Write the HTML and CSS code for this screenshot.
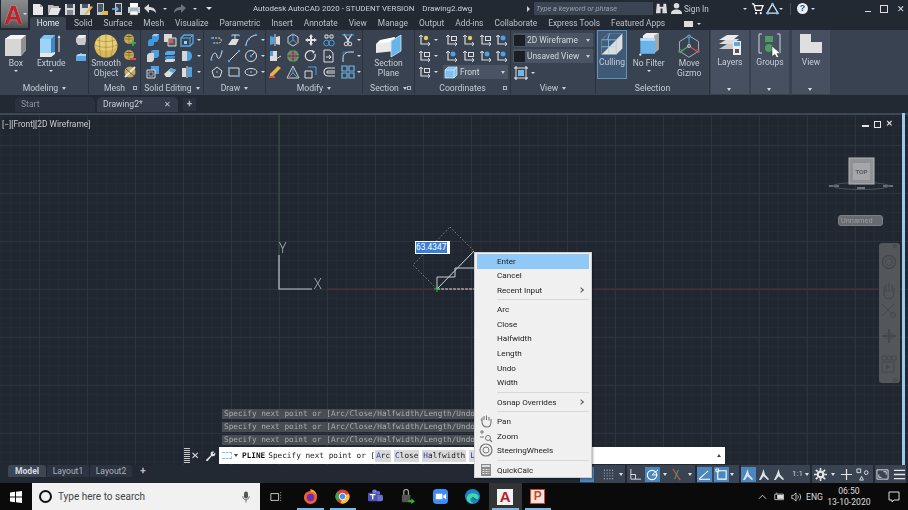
FILE: index.html
```html
<!DOCTYPE html>
<html lang="en">
<head>
<meta charset="utf-8">
<title>AutoCAD 2020</title>
<link rel="stylesheet" href="styles.css">
</head>
<body>
<svg class="defs" aria-hidden="true">
<defs>
<symbol id="box" viewBox="0 0 26 26"><path d="M2 6l6-4h15v15l-5 6H2z" fill="#e6e6e6"/><path d="M2 6h16v17H2z" fill="#d6d6d6"/><path d="M18 6l5-4v15l-5 6z" fill="#8f9091"/><path d="M2 6l6-4h15l-5 4z" fill="#f7f7f7"/></symbol>
<symbol id="extrude" viewBox="0 0 26 26"><path d="M2 6l4-4h11v18l-4 4H2z" fill="#7cc4f3"/><path d="M2 6h11v14H2z" fill="#9bd4f7"/><path d="M13 6l4-4v18l-4 4z" fill="#3f88c5"/><path d="M2 20h11l4-1v2l-4 3H2z" fill="#e9e9e9"/><path d="M21 19V3" stroke="#ddd"/><path d="M19.5 5L21 2l1.5 3z" fill="#ddd"/></symbol>
<symbol id="sphere" viewBox="0 0 26 26"><circle cx="13" cy="13" r="11.5" fill="#d9b95c"/><path d="M2 13a11 11 0 0 1 22 0c-4 6-18 6-22 0z" fill="#e8cf77"/><path d="M2 12c5 3 17 3 22 0M4 7c5 2 13 2 18 0M13 2v22M7 4c-1 6-1 13 1 19M19 4c1 6 1 13-1 19" stroke="#9a7f35" stroke-width=".6" fill="none"/></symbol>
<symbol id="surf" viewBox="0 0 14 14"><path d="M2 5l3-3h7v6l-1 4H4l-2-3z" fill="#c9c9c9"/><path d="M5 2h7l-2 3H3z" fill="#eee"/></symbol>
<symbol id="smallblue" viewBox="0 0 14 14"><path d="M2 7h4V4h2v3h4v5H2z" fill="#5ba9e3"/><path d="M2 7l2-2h8v2z" fill="#a9d7f6"/></symbol>
<symbol id="mplus" viewBox="0 0 14 14"><circle cx="6" cy="6" r="5" fill="#c9ab55"/><path d="M1 6h10M6 1v10M2.5 3c2 1 5 1 7 0" stroke="#7d6a30" stroke-width=".6"/><path d="M10 7v6M7 10h6" stroke="#45b04a" stroke-width="1.6"/></symbol>
<symbol id="mminus" viewBox="0 0 14 14"><circle cx="6" cy="6" r="5" fill="#c9ab55"/><path d="M1 6h10M6 1v10M2.5 3c2 1 5 1 7 0" stroke="#7d6a30" stroke-width=".6"/><path d="M7 10h6" stroke="#d6504c" stroke-width="2"/></symbol>
<symbol id="mslash" viewBox="0 0 14 14"><circle cx="7" cy="7" r="5.5" fill="#c9ab55"/><path d="M2 12L12 2" stroke="#e6e6e6" stroke-width="2"/><path d="M3 4l8 7" stroke="#50606f" stroke-width="1"/></symbol>
<symbol id="union" viewBox="0 0 14 14"><path d="M2 8l2-2h2V3l2-2h5v5l-2 3H8v3l-2 1H2z" fill="#3f9ae0"/><path d="M6 3l2-2h5l-2 2z" fill="#9dd2f6"/></symbol>
<symbol id="subtract" viewBox="0 0 14 14"><path d="M1 1h8v8H1z" fill="#d8d8d8"/><path d="M5 5h8v8H5z" fill="#555d6a" stroke="#ddd"/><path d="M6 6h4v4H6z" fill="#d65a55"/></symbol>
<symbol id="cubeblue" viewBox="0 0 14 14"><path d="M1 5l3-3h9v8l-3 3H1z" fill="none" stroke="#58a8e4" stroke-width="1.3"/><path d="M1 5h9v8M10 5l3-3" fill="none" stroke="#58a8e4"/><path d="M4 8h3v3H4z" fill="#9ad0f6"/></symbol>
<symbol id="cubes" viewBox="0 0 14 14"><path d="M1 6l2-2h5v7l-2 2H1z" fill="#d6d6d6"/><path d="M5 2l2-1h6v6l-2 2H8V4H5z" fill="#4ba0e2"/></symbol>
<symbol id="slices" viewBox="0 0 14 14"><path d="M2 4l2-2h8v3l-2 1H2z" fill="#57a7e4"/><path d="M2 8l2-1h8v2l-2 1H2z" fill="#3a8ed0"/><path d="M2 11l2-1h8v2l-2 1H2z" fill="#d6d6d6"/></symbol>
<symbol id="half" viewBox="0 0 14 14"><path d="M2 2h5v10H2z" fill="#d6d6d6"/><path d="M7 2c4 0 5 3 5 5s-1 5-5 5z" fill="#4da1e2"/></symbol>
<symbol id="cubeline" viewBox="0 0 14 14"><path d="M5 1h8v8H5z" fill="#4da1e2"/><path d="M1 5h8v8H1z" fill="#3a4352" stroke="#ddd"/><path d="M3 7h4v4H3z" fill="none" stroke="#ddd" stroke-width=".6"/></symbol>
<symbol id="eraser" viewBox="0 0 14 14"><path d="M1 9l7-6 5 2-6 7H3z" fill="#ddd"/><path d="M8 3l5 2-3 3-4-2z" fill="#58a8e4"/></symbol>
<symbol id="halves" viewBox="0 0 14 14"><path d="M2 3h4v9H2z" fill="#ddd"/><path d="M8 2h4v10H8z" fill="#4da1e2"/><path d="M7 1v12" stroke="#ddd"/></symbol>
<symbol id="pline" viewBox="0 0 14 14"><path d="M2 5h7c3 0 3 5 0 5H4" fill="none" stroke="#ddd" stroke-dasharray="2 1"/><circle cx="2" cy="5" r="1" fill="#4da1e2"/><circle cx="4" cy="10" r="1" fill="#4da1e2"/></symbol>
<symbol id="hatch" viewBox="0 0 14 14"><path d="M1 12l4-6h7l-3 6z" fill="#ddd"/><path d="M5 2h7M8 2v5" stroke="#ddd"/><circle cx="5" cy="2.500" r="1" fill="#4da1e2"/><circle cx="12" cy="2.500" r="1" fill="#4da1e2"/></symbol>
<symbol id="arc" viewBox="0 0 14 14"><path d="M2 12C3 6 7 3 12 2" fill="none" stroke="#ddd"/><circle cx="2" cy="12" r="1.200" fill="#4da1e2"/><circle cx="5" cy="6" r="1.200" fill="#4da1e2"/><circle cx="12" cy="2" r="1.200" fill="#4da1e2"/></symbol>
<symbol id="spline" viewBox="0 0 14 14"><path d="M1 11C3 2 6 3 7 7s3 4 5-5" fill="none" stroke="#ddd"/><circle cx="1.500" cy="11" r="1" fill="#4da1e2"/><circle cx="7" cy="7" r="1" fill="#4da1e2"/><circle cx="12" cy="2" r="1" fill="#4da1e2"/></symbol>
<symbol id="line" viewBox="0 0 14 14"><path d="M2 12L12 2" stroke="#ddd"/><circle cx="2" cy="12" r="1.200" fill="#4da1e2"/><circle cx="12" cy="2" r="1.200" fill="#4da1e2"/></symbol>
<symbol id="circle" viewBox="0 0 14 14"><circle cx="7" cy="7" r="5.500" fill="none" stroke="#ddd"/><path d="M7 7l4-4" stroke="#ddd"/><circle cx="7" cy="7" r="1.200" fill="#4da1e2"/></symbol>
<symbol id="polygon" viewBox="0 0 14 14"><path d="M7 2l5 4-2 6H4L2 6z" fill="none" stroke="#ddd"/><circle cx="7" cy="7" r="1" fill="#4da1e2"/></symbol>
<symbol id="rect" viewBox="0 0 14 14"><path d="M2 3h10v8H2z" fill="none" stroke="#ddd"/><circle cx="2" cy="3" r="1.200" fill="#4da1e2"/><circle cx="12" cy="11" r="1.200" fill="#4da1e2"/></symbol>
<symbol id="ellipse" viewBox="0 0 14 14"><ellipse cx="7" cy="7" rx="6" ry="3.500" fill="none" stroke="#ddd"/><circle cx="7" cy="7" r="1" fill="#4da1e2"/></symbol>
<symbol id="mirror" viewBox="0 0 14 14"><path d="M2 3l4 1v7l-4 1z" fill="#4da1e2"/><path d="M12 3L8 4v7l4 1z" fill="#ddd"/><path d="M7 1v12" stroke="#ddd"/></symbol>
<symbol id="gizmo" viewBox="0 0 14 14"><path d="M7 1l5 3v6l-5 3-5-3V4z" fill="none" stroke="#ccc"/><path d="M7 7V2M7 7l-4 3M7 7l4 3" stroke="#4da1e2"/><circle cx="3" cy="10" r="1" fill="#4fb35a"/><circle cx="11" cy="10" r="1" fill="#d6504c"/><circle cx="7" cy="2" r="1" fill="#4da1e2"/></symbol>
<symbol id="move" viewBox="0 0 14 14"><path d="M7 1l2 3H8v2h2V5l3 2-3 2V8H8v2h1l-2 3-2-3h1V8H4v1L1 7l3-2v1h2V4H5z" fill="#e2e2e2"/></symbol>
<symbol id="chain" viewBox="0 0 14 14"><circle cx="4.500" cy="10" r="2.800" fill="none" stroke="#4da1e2"/><circle cx="9.500" cy="10" r="2.800" fill="none" stroke="#4da1e2"/><path d="M3 2h3v3H3zM8 2h3v3H8z" fill="none" stroke="#ddd"/></symbol>
<symbol id="scissors" viewBox="0 0 14 14"><path d="M3 1l5 8M11 1L6 9" stroke="#ddd" stroke-width="1.400"/><circle cx="5" cy="11" r="1.800" fill="none" stroke="#ddd"/><circle cx="9" cy="11" r="1.800" fill="none" stroke="#ddd"/><path d="M1 2h12" stroke="#4da1e2"/></symbol>
<symbol id="stretch" viewBox="0 0 14 14"><path d="M2 2h7v10H2z" fill="#ddd"/><path d="M2 2h3v5H2z" fill="#4da1e2"/><path d="M8 10l5-3" stroke="#ddd"/></symbol>
<symbol id="wheel" viewBox="0 0 14 14"><circle cx="7" cy="7" r="6" fill="#54a36a"/><circle cx="7" cy="7" r="4" fill="#c9544f"/><circle cx="7" cy="7" r="2" fill="#4da1e2"/><path d="M1 7h12M7 1v12" stroke="#3a4352"/></symbol>
<symbol id="rotate" viewBox="0 0 14 14"><path d="M11 5a5 5 0 1 1-2-2.500" fill="none" stroke="#ddd" stroke-width="1.300"/><path d="M8 1l3 1.500L9 5z" fill="#ddd"/></symbol>
<symbol id="docarrow" viewBox="0 0 14 14"><path d="M2 1h6l3 3v9H2z" fill="none" stroke="#ddd"/><path d="M4 8h5M7 6l2 2-2 2" stroke="#ddd" fill="none"/></symbol>
<symbol id="fillet" viewBox="0 0 14 14"><path d="M2 13V9c0-4 3-6 7-6h4" fill="none" stroke="#ddd"/><path d="M2 13V3h10" fill="none" stroke="#4da1e2" stroke-width=".6"/></symbol>
<symbol id="pencil" viewBox="0 0 14 14"><path d="M2 9l8-8 3 2-8 8-3 1z" fill="#e5b84a"/><path d="M1 12h6" stroke="#d6504c" stroke-width="2"/></symbol>
<symbol id="tri" viewBox="0 0 14 14"><path d="M7 1l6 12H1z" fill="none" stroke="#ccc"/><path d="M7 8V3M7 8l-4 4M7 8l4 4" stroke="#4da1e2"/><circle cx="3" cy="12" r="1" fill="#d6504c"/><circle cx="11" cy="12" r="1" fill="#4fb35a"/></symbol>
<symbol id="scale" viewBox="0 0 14 14"><path d="M1 6h7v7H1z" fill="none" stroke="#ddd"/><path d="M4 2h8v8" fill="none" stroke="#4da1e2"/></symbol>
<symbol id="offset" viewBox="0 0 14 14"><path d="M13 3H6a4 4 0 0 0 0 8h7M13 6H6a1 1 0 0 0 0 2h7" fill="none" stroke="#ddd" stroke-width="1.200"/></symbol>
<symbol id="array" viewBox="0 0 14 14"><path d="M1 1h5v5H1zM8 1h5v5H8zM1 8h5v5H1zM8 8h5v5H8z" fill="none" stroke="#6fb7ea" stroke-width="1.200"/></symbol>
<symbol id="plane" viewBox="0 0 30 26"><path d="M2 11l19-7v14L2 20z" fill="#e9e9e9"/><path d="M2 11l4-4 15-3-5 5z" fill="#fff"/><path d="M17 8l10-6v16l-10 6z" fill="#68b5ec" stroke="#cfe7f8" stroke-width=".8"/></symbol>
<symbol id="ucs" viewBox="0 0 14 14"><path d="M3 2v9h9" fill="none" stroke="#ddd" stroke-width="1.200"/><path d="M1 4l2-2 2 2M10 9l2 2-2 2" fill="none" stroke="#ddd"/><circle cx="8" cy="5" r="2.200" fill="#e8c95a"/></symbol>
<symbol id="ucsb" viewBox="0 0 14 14"><path d="M3 2v9h9" fill="none" stroke="#ddd" stroke-width="1.200"/><path d="M1 4l2-2 2 2M10 9l2 2-2 2" fill="none" stroke="#ddd"/><circle cx="8" cy="5" r="2.500" fill="#4da1e2"/></symbol>
<symbol id="ucsd" viewBox="0 0 14 14"><path d="M3 2v9h9" fill="none" stroke="#ddd" stroke-width="1.200"/><path d="M1 4l2-2 2 2M10 9l2 2-2 2" fill="none" stroke="#ddd"/><path d="M6 3h6v5H6z" fill="#ddd"/><path d="M7 4h4v3H7z" fill="#3a4352"/></symbol>
<symbol id="frontcube" viewBox="0 0 14 14"><path d="M1 5l3-3h9v8l-3 3H1z" fill="#7ec0f0" stroke="#dff" stroke-width=".6"/><path d="M1 5h9v8M10 5l3-3" fill="none" stroke="#e6f3fc" stroke-width=".7"/></symbol>
<symbol id="vport" viewBox="0 0 14 14"><path d="M2 2h10v10H2z" fill="none" stroke="#ddd"/><path d="M4 4h6v6H4z" fill="#6fb7ea"/><path d="M1 1h2M1 1v2M13 1h-2M13 1v2M1 13h2M1 13v-2M13 13h-2M13 13v-2" stroke="#fff"/></symbol>
<symbol id="culling" viewBox="0 0 30 30"><path d="M3 9l7-7h17v17l-7 7H3z" fill="#dedede"/><path d="M3 9l7-7h17L3 26z" fill="#41607f"/><path d="M3 9h17v17M20 9l7-7M3 17h17M11 9v17M12 2l-2 7" fill="none" stroke="#9fd0ef" stroke-width=".8"/></symbol>
<symbol id="nofilter" viewBox="0 0 30 30"><path d="M8 3l4-3h14v19l-5 4H8z" fill="#eee"/><path d="M21 3l5-3v19l-5 4z" fill="#a7a7a7"/><path d="M5 6h17v18H5z" fill="#6ab4ec"/><path d="M5 6h17v3H5z" fill="#bde0f8"/><circle cx="5" cy="25" r="1.300" fill="#d8eefc"/></symbol>
<symbol id="movegizmo" viewBox="0 0 30 30"><path d="M15 3l11 7v11l-11 7-11-7V10z" fill="none" stroke="#b9bec6"/><path d="M15 15V5" stroke="#4da1e2" stroke-width="1.200"/><path d="M15 15L6 21" stroke="#54b060" stroke-width="1.200"/><path d="M15 15l9 6" stroke="#d6504c" stroke-width="1.200"/><circle cx="15" cy="4" r="1.800" fill="none" stroke="#4da1e2"/><circle cx="15" cy="15" r="1.800" fill="none" stroke="#ccc"/><circle cx="5" cy="21" r="1.800" fill="none" stroke="#54b060"/><circle cx="25" cy="21" r="1.800" fill="none" stroke="#d6504c"/></symbol>
<symbol id="layers" viewBox="0 0 24 24"><path d="M1 16l8-5h14l-6 5z" fill="#c9c9c9"/><path d="M1 11l8-5h12l-6 5z" fill="#dcdcdc"/><path d="M1 7l8-5h12l-6 5z" fill="#eaeaea"/><path d="M15 8h8v14h-8z" fill="#eee"/><path d="M16 9h6v4h-6z" fill="#59a9e6"/><path d="M17 16h4v4h-4z" fill="#555"/></symbol>
<symbol id="groups" viewBox="0 0 24 24"><path d="M4 1H1v19h3M19 1h3v19h-3" fill="none" stroke="#cfd3d8"/><path d="M7 3h8v6H7z" fill="#4f9d63"/><circle cx="11" cy="15" r="4" fill="#4f9d63"/><path d="M14 13l8 7-3 .5 2 4-2 1-2-4-3 2z" fill="#fff" stroke="#222" stroke-width=".5"/></symbol>
<symbol id="view" viewBox="0 0 24 24"><path d="M1 1h11v8h11v11H1z" fill="#dfdfdf"/></symbol>
<symbol id="q-new" viewBox="0 0 14 14"><path d="M2 2h7l3 3v8H2z" fill="#e8e8e8"/><path d="M9 2l3 3H9z" fill="#999"/></symbol>
<symbol id="q-open" viewBox="0 0 14 14"><path d="M1 3h5l1 1h5v2H4l-3 6z" fill="#bbb"/><path d="M4 6h10l-3 7H1z" fill="#e6e6e6"/></symbol>
<symbol id="q-save" viewBox="0 0 14 14"><path d="M2 2h10v11H2z" fill="#d8d8d8"/><path d="M4 2h6v4H4z" fill="#4b5564"/><path d="M4 8h6v5H4z" fill="#848b95"/></symbol>
<symbol id="q-saveas" viewBox="0 0 14 14"><path d="M1 2h10v11H1z" fill="#d8d8d8"/><path d="M3 2h6v4H3z" fill="#4b5564"/><path d="M6 11l6-7 2 1-6 7-3 1z" fill="#e5b84a"/></symbol>
<symbol id="q-cloud" viewBox="0 0 14 14"><path d="M2 1h7v12H2z" fill="#c5c5c5"/><path d="M3 2h5v8H3z" fill="#4b5564"/><path d="M7 9h6v4H7z" fill="#e5b84a"/></symbol>
<symbol id="q-share" viewBox="0 0 14 14"><path d="M4 1h7v12H4z" fill="#ccc"/><path d="M5 2h5v8H5z" fill="#3a4352"/><path d="M1 7h6M5 5l2 2-2 2" stroke="#6fb7ea" fill="none" stroke-width="1.300"/></symbol>
<symbol id="q-print" viewBox="0 0 14 14"><path d="M3 1h8v4H3z" fill="#fff"/><path d="M1 5h12v6H1z" fill="#cfcfcf"/><path d="M3 9h8v4H3z" fill="#fff" stroke="#666" stroke-width=".5"/><path d="M3 7h8" stroke="#4da1e2"/></symbol>
<symbol id="q-undo" viewBox="0 0 14 14"><path d="M1 6l5-4v3c4 0 7 2 7 6-2-2-3-3-7-3v3z" fill="#d8d8d8"/></symbol>
<symbol id="q-redo" viewBox="0 0 14 14"><path d="M13 6L8 2v3c-4 0-7 2-7 6 2-2 3-3 7-3v3z" fill="#6a7280"/></symbol>
<symbol id="binoc" viewBox="0 0 14 14"><path d="M2 2h3v3h4V2h3l1 10H8V7H6v5H1z" fill="#ddd"/></symbol>
<symbol id="user" viewBox="0 0 14 14"><circle cx="7" cy="4" r="3" fill="#ddd"/><path d="M1 13c0-4 3-5 6-5s6 1 6 5z" fill="#ddd"/></symbol>
<symbol id="cart" viewBox="0 0 14 14"><path d="M1 2h2l2 7h6l2-5H4" fill="none" stroke="#fff" stroke-width="1.300"/><circle cx="5.500" cy="12" r="1.200" fill="#fff"/><circle cx="10.500" cy="12" r="1.200" fill="#fff"/></symbol>
<symbol id="a360" viewBox="0 0 14 14"><path d="M7 2l6 10H1z" fill="none" stroke="#d5e6f5" stroke-width="1.400"/><circle cx="7" cy="2.500" r="1.500" fill="#7ec0f0"/><circle cx="2" cy="12" r="1.500" fill="#7ec0f0"/><circle cx="12" cy="12" r="1.500" fill="#7ec0f0"/></symbol>
<symbol id="hand" viewBox="0 0 14 14"><path d="M3 7V3.500M5 6V2M7.500 6V1.500M10 6.500V3M3 7L2 5.500M3 7c0 4 2 6 5 6 3 0 4-2 4-5V5" fill="none" stroke="#777" stroke-width="1.100"/></symbol>
<symbol id="zoomm" viewBox="0 0 14 14"><path d="M1 3h4M3 1v4M1 8h4" stroke="#777"/><circle cx="9" cy="9" r="2.500" fill="none" stroke="#777"/><path d="M11 11l2 2" stroke="#777" stroke-width="1.200"/></symbol>
<symbol id="steer" viewBox="0 0 14 14"><circle cx="7" cy="7" r="6" fill="none" stroke="#777" stroke-width="1.200"/><circle cx="7" cy="7" r="3" fill="none" stroke="#777"/></symbol>
<symbol id="calc" viewBox="0 0 14 14"><path d="M2 1h10v12H2z" fill="#8a8a8a"/><path d="M3 2h8v2H3z" fill="#ddd"/><path d="M3.500 6h2v1h-2zM6.500 6h2v1h-2zM9.500 6h1v1h-1zM3.500 8h2v1h-2zM6.500 8h2v1h-2zM9.500 8h1v1h-1zM3.500 10h2v1h-2zM6.500 10h2v1h-2zM9.500 10h1v1h-1z" fill="#e5e5e5"/></symbol>
<symbol id="wrench" viewBox="0 0 14 14"><path d="M2 12L8 6c-1-3 1-5 4-4L10 4l1 1 2-2c1 3-1 5-4 4l-5 6z" fill="#e8e8e8"/></symbol>
<symbol id="grid" viewBox="0 0 14 14"><path d="M2 2h1v1H2zM5 2h1v1H5zM8 2h1v1H8zM11 2h1v1h-1zM2 5h1v1H2zM5 5h1v1H5zM8 5h1v1H8zM11 5h1v1h-1zM2 8h1v1H2zM5 8h1v1H5zM8 8h1v1H8zM11 8h1v1h-1zM2 11h1v1H2zM5 11h1v1H5zM8 11h1v1H8zM11 11h1v1h-1z" fill="#dfe3e8"/></symbol>
<symbol id="ortho" viewBox="0 0 14 14"><path d="M2 1v11h11M2 7h5v5" fill="none" stroke="#dfe3e8"/></symbol>
<symbol id="polar" viewBox="0 0 14 14"><circle cx="6.500" cy="7.500" r="5" fill="none" stroke="#fff" stroke-width="1.200"/><path d="M6.500 7.500L13 2M6.500 7.500h6" stroke="#fff"/></symbol>
<symbol id="osnap" viewBox="0 0 14 14"><path d="M3 1l8 12" stroke="#d6504c" stroke-width="1.200"/><path d="M9 2L5 12" stroke="#54b060" stroke-width="1"/></symbol>
<symbol id="angle" viewBox="0 0 14 14"><path d="M1 12h12M1 12L11 3" stroke="#fff" stroke-width="1.100"/></symbol>
<symbol id="sq" viewBox="0 0 14 14"><path d="M3 3h9v9H3z" fill="none" stroke="#fff" stroke-width="1.200"/><path d="M1 1h3v3H1z" fill="none" stroke="#fff"/></symbol>
<symbol id="person" viewBox="0 0 14 14"><path d="M6 1l1.500 6L12 12l-1.500 1L6 9l-3 4H1l3-6z" fill="#dfe3e8"/></symbol>
<symbol id="gear" viewBox="0 0 14 14"><circle cx="7" cy="7" r="3" fill="none" stroke="#e6e6e6" stroke-width="2.400"/><path d="M7 0v3M7 11v3M0 7h3M11 7h3M2 2l2 2M10 10l2 2M12 2l-2 2M2 12l2-2" stroke="#e6e6e6" stroke-width="1.800"/></symbol>
<symbol id="plus" viewBox="0 0 14 14"><path d="M7 1v12M1 7h12" stroke="#e6e6e6" stroke-width="1.300"/></symbol>
<symbol id="shapes" viewBox="0 0 14 14"><path d="M1 1h4v4H1zM4 13l2-4 2 4z" fill="none" stroke="#dfe3e8"/><circle cx="11" cy="5" r="2" fill="none" stroke="#dfe3e8"/></symbol>
<symbol id="mon" viewBox="0 0 14 14"><path d="M1 2h12v10H1z" fill="none" stroke="#dfe3e8"/><path d="M8 4h3v3M6 10H3V7" fill="none" stroke="#dfe3e8"/></symbol>
<symbol id="menu3" viewBox="0 0 14 14"><path d="M1 2.500h12M1 7h12M1 11.500h12" stroke="#e6e6e6" stroke-width="1.400"/></symbol>
</defs>
</svg>

<header class="top">
  <button class="app"><span class="app-a">A</span><i class="caret mini"></i></button>
  <div class="titlebar">
    <div class="qat">
      <svg class="i"><use href="#q-new"/></svg><svg class="i"><use href="#q-open"/></svg><svg class="i"><use href="#q-save"/></svg><svg class="i"><use href="#q-saveas"/></svg><svg class="i"><use href="#q-cloud"/></svg><svg class="i"><use href="#q-share"/></svg><svg class="i"><use href="#q-print"/></svg><svg class="i"><use href="#q-undo"/></svg><i class="caret mini"></i><svg class="i"><use href="#q-redo"/></svg><i class="caret mini"></i><i class="caret q-c"></i>
    </div>
    <div class="doc-title">Autodesk AutoCAD 2020 - STUDENT VERSION<span class="doc-name">Drawing2.dwg</span></div>
    <i class="play"></i>
    <div class="search">Type a keyword or phrase</div>
    <div class="account">
      <svg class="i"><use href="#binoc"/></svg><svg class="i"><use href="#user"/></svg><span class="signin">Sign In</span><i class="caret mini"></i><svg class="i"><use href="#cart"/></svg><svg class="i"><use href="#a360"/></svg><i class="caret mini"></i><i class="vsep"></i><span class="help">?</span><i class="caret mini"></i>
    </div>
    <div class="winbtns">
      <span class="w-min"></span><span class="w-res"></span><span class="w-x">✕</span>
    </div>
  </div>
  <nav class="tabs">
    <a class="tab on">Home</a><a class="tab">Solid</a><a class="tab">Surface</a><a class="tab">Mesh</a><a class="tab">Visualize</a><a class="tab">Parametric</a><a class="tab">Insert</a><a class="tab">Annotate</a><a class="tab">View</a><a class="tab">Manage</a><a class="tab">Output</a><a class="tab">Add-ins</a><a class="tab">Collaborate</a><a class="tab">Express Tools</a><a class="tab">Featured Apps</a><span class="tab-min"></span><i class="caret mini"></i>
  </nav>
</header>

<section class="ribbon">
  <div class="panel p-modeling">
    <div class="pbody">
      <div class="big b-box"><svg class="bi"><use href="#box"/></svg><span>Box</span><i class="caret mini"></i></div>
      <div class="big b-ext"><svg class="bi"><use href="#extrude"/></svg><span>Extrude</span><i class="caret mini"></i></div>
      <div class="stack"><svg class="i"><use href="#surf"/></svg><svg class="i"><use href="#smallblue"/></svg></div>
    </div>
    <div class="plabel">Modeling <i class="caret"></i></div>
  </div>
  <div class="panel p-mesh">
    <div class="pbody">
      <div class="big b-smooth"><svg class="bi"><use href="#sphere"/></svg><span>Smooth<br>Object</span></div>
      <div class="stack s3"><svg class="i"><use href="#mplus"/></svg><svg class="i"><use href="#mminus"/></svg><svg class="i"><use href="#mslash"/></svg></div>
    </div>
    <div class="plabel">Mesh<i class="launch"></i></div>
  </div>
  <div class="panel p-solid">
    <div class="pbody">
      <div class="tools t4">
        <svg class="i"><use href="#union"/></svg><svg class="i"><use href="#subtract"/></svg><svg class="i"><use href="#cubeblue"/></svg><i class="caret mini"></i>
        <svg class="i"><use href="#cubes"/></svg><svg class="i"><use href="#slices"/></svg><svg class="i"><use href="#half"/></svg><i class="caret mini"></i>
        <svg class="i"><use href="#cubeline"/></svg><svg class="i"><use href="#eraser"/></svg><svg class="i"><use href="#halves"/></svg><i class="caret mini"></i>
      </div>
    </div>
    <div class="plabel">Solid Editing <i class="caret"></i></div>
  </div>
  <div class="panel p-draw">
    <div class="pbody">
      <div class="tools t4">
        <svg class="i"><use href="#pline"/></svg><svg class="i"><use href="#hatch"/></svg><svg class="i"><use href="#arc"/></svg><i class="caret mini"></i>
        <svg class="i"><use href="#spline"/></svg><svg class="i"><use href="#line"/></svg><svg class="i"><use href="#circle"/></svg><i class="caret mini"></i>
        <svg class="i"><use href="#polygon"/></svg><svg class="i"><use href="#rect"/></svg><svg class="i"><use href="#ellipse"/></svg><i class="caret mini"></i>
      </div>
    </div>
    <div class="plabel">Draw <i class="caret"></i></div>
  </div>
  <div class="panel p-modify">
    <div class="pbody">
      <div class="tools t-mod">
        <svg class="i"><use href="#mirror"/></svg><svg class="i"><use href="#gizmo"/></svg><svg class="i"><use href="#move"/></svg><svg class="i"><use href="#chain"/></svg><svg class="i"><use href="#scissors"/></svg><i class="caret mini"></i>
        <svg class="i"><use href="#stretch"/></svg><svg class="i"><use href="#wheel"/></svg><svg class="i"><use href="#rotate"/></svg><svg class="i"><use href="#docarrow"/></svg><svg class="i"><use href="#fillet"/></svg><i class="caret mini"></i>
        <svg class="i"><use href="#pencil"/></svg><svg class="i"><use href="#tri"/></svg><svg class="i"><use href="#scale"/></svg><svg class="i"><use href="#offset"/></svg><svg class="i"><use href="#array"/></svg><i class="caret mini"></i>
      </div>
    </div>
    <div class="plabel">Modify <i class="caret"></i></div>
  </div>
  <div class="panel p-section">
    <div class="pbody">
      <div class="big b-section"><svg class="bi bi-w"><use href="#plane"/></svg><span>Section<br>Plane</span></div>
    </div>
    <div class="plabel">Section <i class="caret"></i><i class="launch"></i></div>
  </div>
  <div class="panel p-coord">
    <div class="pbody">
      <div class="tools t-coord">
        <svg class="i"><use href="#ucs"/></svg><i class="caret mini"></i><svg class="i"><use href="#ucsd"/></svg><svg class="i"><use href="#ucs"/></svg><svg class="i"><use href="#ucsd"/></svg><svg class="i"><use href="#ucsb"/></svg>
        <svg class="i"><use href="#ucsd"/></svg><i class="caret mini"></i><svg class="i"><use href="#ucsb"/></svg><svg class="i"><use href="#ucsd"/></svg><svg class="i"><use href="#ucsb"/></svg><svg class="i"><use href="#ucsb"/></svg>
        <svg class="i"><use href="#ucsd"/></svg><i class="caret mini"></i><div class="combo c-front"><svg class="i"><use href="#frontcube"/></svg><span>Front</span><i class="caret"></i></div>
      </div>
    </div>
    <div class="plabel">Coordinates<i class="launch"></i></div>
  </div>
  <div class="panel p-view">
    <div class="pbody col">
      <div class="combo c-view"><span class="swatch"></span><span>2D Wireframe</span><i class="caret"></i></div>
      <div class="combo c-view"><span class="swatch"></span><span>Unsaved View</span><i class="caret"></i></div>
      <div class="vrow"><svg class="i"><use href="#vport"/></svg><i class="caret mini"></i></div>
    </div>
    <div class="plabel">View <i class="caret"></i></div>
  </div>
  <div class="panel p-sel">
    <div class="pbody">
      <div class="big b-cull"><svg class="bi bi-s"><use href="#culling"/></svg><span>Culling</span></div>
      <div class="big b-nof"><svg class="bi bi-s"><use href="#nofilter"/></svg><span>No Filter</span><i class="caret mini"></i></div>
      <div class="big b-gizmo"><svg class="bi bi-s"><use href="#movegizmo"/></svg><span>Move<br>Gizmo</span></div>
    </div>
    <div class="plabel">Selection</div>
  </div>
  <div class="fold"><svg class="fi"><use href="#layers"/></svg><span>Layers</span><i class="caret"></i></div>
  <div class="fold"><svg class="fi"><use href="#groups"/></svg><span>Groups</span><i class="caret"></i></div>
  <div class="fold f-last"><svg class="fi"><use href="#view"/></svg><span>View</span><i class="caret"></i></div>
</section>

<div class="docs">
  <div class="doc d-start">Start</div>
  <div class="doc d-cur">Drawing2*<span class="d-x">✕</span></div>
  <div class="d-plus">+</div>
</div>

<main class="viewport">
  <svg class="canvas" viewBox="0 113 908 352" aria-hidden="true">
    <path d="M279 113V255" stroke="#2e5a33" stroke-width="1"/>
    <path d="M327 289H900" stroke="#5a2f35" stroke-width="1"/>
    <path d="M279 255V289H312" fill="none" stroke="#c4c7cc" stroke-width="1.200"/>
    <text x="279" y="253" class="axis">Y</text>
    <text x="314" y="289" class="axis">X</text>
    <path d="M450 227L474 251L437 289L413 265Z" fill="none" stroke="#7d838b" stroke-dasharray="1.500 2"/>
    <path d="M437 289V277H455V268H480" fill="none" stroke="#c9cbcf"/>
    <path d="M437 289L474 251" stroke="#c9cbcf"/>
    <path d="M437 289H480" stroke="#d5d7da" stroke-dasharray="3 1"/>
    <path d="M434 289h6M437 286v6" stroke="#3bb54a"/>

    <path d="M829 186h10M883 186h10" stroke="#80858b" stroke-width="1.500"/>
    <ellipse cx="861" cy="186" rx="28" ry="3.500" fill="none" stroke="#4d535b"/>
    <path d="M857 188h8" stroke="#8a8f95" stroke-width="1.500"/>
    <rect x="849" y="158" width="25" height="26" fill="#8f9295" stroke="#b5b7b9"/>
    <rect x="853" y="163" width="17" height="17" fill="#a4a6a8"/>
    <text x="861.500" y="174" class="top-t">TOP</text>

    <rect x="879" y="243" width="21" height="140" rx="3" fill="#53575b"/>
    <circle cx="889" cy="262" r="6.500" fill="none" stroke="#44484c" stroke-width="1.500"/><circle cx="889" cy="262" r="3.500" fill="none" stroke="#44484c"/>
    <path d="M884 292v-6m2 6v-8m3 8v-9m3 9v-7m2 7v-4m-10 4c0 4 2 7 5 7s5-3 5-7" fill="none" stroke="#44484c" stroke-width="1.200"/>
    <path d="M882 304l12 12M894 304l-12 12" stroke="#44484c"/><circle cx="893" cy="315" r="2.500" fill="none" stroke="#44484c"/>
    <path d="M889 329v14M882 336h14" stroke="#44484c" stroke-width="2"/><ellipse cx="889" cy="336" rx="5" ry="3" fill="none" stroke="#44484c"/>
    <path d="M882 356h4v4h-4zM887 356h4v4h-4zM892 356h4v4h-4z" fill="none" stroke="#44484c"/>
    <rect x="882" y="362" width="12" height="10" fill="none" stroke="#44484c"/><path d="M886 364l4 3-4 3z" fill="#44484c"/>
    <circle cx="895" cy="246" r="1.500" fill="none" stroke="#44484c"/><circle cx="895" cy="380" r="1.500" fill="none" stroke="#44484c"/>
  </svg>
  <div class="vlabel">[−][Front][2D Wireframe]</div>
  <div class="vp-ctl"><span class="v-min"></span><span class="v-res"></span><span class="v-x">✕</span></div>
  <div class="unnamed">Unnamed</div>
  <div class="edge"></div>
  <div class="dyn"><span>63.4347</span></div>

  <div class="history">
    <p>Specify next point or [Arc/Close/Halfwidth/Length/Undo</p>
    <p>Specify next point or [Arc/Close/Halfwidth/Length/Undo</p>
    <p>Specify next point or [Arc/Close/Halfwidth/Length/Undo</p>
  </div>
  <div class="cmd">
    <i class="grip"></i><span class="cmd-x">✕</span><svg class="i wr"><use href="#wrench"/></svg>
    <div class="cmd-in">
      <i class="cmd-ic"></i><i class="caret dk"></i>
      <b>PLINE</b><span class="cmd-t">Specify next point or [</span><span class="chip"><u>A</u>rc</span><span class="chip"><u>C</u>lose</span><span class="chip"><u>H</u>alfwidth</span><span class="chip"><u>L</u>e</span>
      <i class="caret dk up"></i>
    </div>
  </div>

  <ul class="menu">
    <li class="hi">Enter</li>
    <li>Cancel</li>
    <li class="sub">Recent Input</li>
    <li class="sep"></li>
    <li>Arc</li>
    <li>Close</li>
    <li>Halfwidth</li>
    <li>Length</li>
    <li>Undo</li>
    <li>Width</li>
    <li class="sep"></li>
    <li class="sub">Osnap Overrides</li>
    <li class="sep"></li>
    <li><svg class="i mi"><use href="#hand"/></svg>Pan</li>
    <li><svg class="i mi"><use href="#zoomm"/></svg>Zoom</li>
    <li><svg class="i mi"><use href="#steer"/></svg>SteeringWheels</li>
    <li class="sep"></li>
    <li><svg class="i mi"><use href="#calc"/></svg>QuickCalc</li>
  </ul>
</main>

<footer class="status">
  <div class="ltabs">
    <span class="lt on">Model</span><span class="lt">Layout1</span><span class="lt">Layout2</span><span class="lt-plus">+</span>
  </div>
  <div class="sgroups">
    <div class="sg sg1"><span class="sb act"></span><svg class="i"><use href="#grid"/></svg><i class="caret"></i></div>
    <div class="sg sg2"><svg class="i"><use href="#ortho"/></svg><span class="sb act"><svg class="i"><use href="#polar"/></svg></span><i class="caret"></i><svg class="i"><use href="#osnap"/></svg><i class="caret"></i></div>
    <div class="sg sg3"><span class="sb act"><svg class="i"><use href="#angle"/></svg></span><span class="sb act"><svg class="i"><use href="#sq"/></svg></span><i class="caret"></i></div>
    <div class="sg sg4"><span class="sb act"><svg class="i"><use href="#person"/></svg></span><svg class="i"><use href="#person"/></svg><svg class="i"><use href="#person"/></svg><span class="ratio">1:1</span><i class="caret"></i></div>
    <div class="sg sg5"><svg class="i"><use href="#gear"/></svg><i class="caret"></i><svg class="i"><use href="#plus"/></svg><svg class="i"><use href="#shapes"/></svg></div>
    <div class="sg sg6"><svg class="i"><use href="#mon"/></svg><svg class="i"><use href="#menu3"/></svg></div>
  </div>
</footer>

<div class="taskbar">
  <div class="start"><svg viewBox="0 0 12 12" class="winlogo"><path d="M0 1.500l5-.7V5.500H0zM6 .7L12 0v5.500H6zM0 6.500h5v4.700l-5-.7zM6 6.500h6V12l-6-.8z" fill="#fff"/></svg></div>
  <div class="tsearch"><i class="cortana"></i><span>Type here to search</span><svg class="mic" viewBox="0 0 10 14"><rect x="2.500" y="0" width="5" height="9" rx="2.500" fill="#555"/><path d="M1 6c0 6 8 6 8 0M5 11v3" fill="none" stroke="#555"/></svg></div>
  <svg class="taskview" viewBox="0 0 14 14"><path d="M1 3h9v8H1zM12 2h1M12 5h1M12 8h1M12 11h1" fill="none" stroke="#ddd"/></svg>
  <div class="apps">
    <span class="ta run"><svg viewBox="0 0 16 16"><circle cx="8" cy="9" r="7" fill="#f2602a"/><circle cx="8" cy="9" r="4" fill="#6b2fb3"/><path d="M8 0c4 1 7 4 7 8-1-3-4-5-7-5z" fill="#ffb02e"/></svg></span>
    <span class="ta run"><svg viewBox="0 0 16 16"><circle cx="8" cy="8" r="7.500" fill="#e0432f"/><path d="M8 8L1.500 12A7.500 7.500 0 0 1 2 3.500z" fill="#2fa84f"/><path d="M8 8l6.800-3A7.500 7.500 0 0 1 6 15.300z" fill="#f9c22e"/><circle cx="8" cy="8" r="3.500" fill="#4a8cf0" stroke="#fff"/></svg></span>
    <span class="ta"><svg viewBox="0 0 16 16"><circle cx="11" cy="4" r="2" fill="#6d71c9"/><rect x="8" y="6" width="8" height="7" rx="2" fill="#6d71c9"/><circle cx="7" cy="3" r="2.500" fill="#7b83eb"/><rect x="0" y="4" width="10" height="9" rx="1" fill="#4b53bc"/><path d="M2 6h6M5 6v5" stroke="#fff" stroke-width="1.400"/></svg></span>
    <span class="ta"><svg viewBox="0 0 16 16"><rect x="2" y="6" width="9" height="8" rx="1" fill="#555"/><path d="M4 6V3a2.500 2.500 0 0 1 5 0v3" fill="none" stroke="#aaa" stroke-width="1.300"/><path d="M9 12h3v-2l4 3-4 3v-2H9z" fill="#2eb82e"/></svg></span>
    <span class="ta"><svg viewBox="0 0 16 16"><rect x="0" y="0" width="16" height="16" rx="4" fill="#3d8ef0"/><path d="M3 5h7v6H3zM11 7l3-2v6l-3-2z" fill="#fff"/></svg></span>
    <span class="ta"><svg viewBox="0 0 16 16"><circle cx="8" cy="8" r="8" fill="#1b84c9"/><path d="M2 9c1-5 9-6 12-2 1 1 1 4-2 4-3 0-2-2-4-2-3 0-3 5 1 6-4 1-8-2-7-6z" fill="#46d6a0"/><path d="M8 9c2 0 1 2 4 2" stroke="#0b3b66" fill="none"/></svg></span>
    <span class="ta run act"><span class="acad">A</span></span>
    <span class="ta run"><span class="ppt">P</span></span>
  </div>
  <div class="tray">
    <svg class="tr-up" viewBox="0 0 10 6"><path d="M1 5l4-4 4 4" fill="none" stroke="#ddd"/></svg>
    <svg class="tr-b" viewBox="0 0 14 10"><path d="M1 2h11v7H1z" fill="none" stroke="#ddd"/><path d="M4 3h8v5H4z" fill="#ddd"/><path d="M3 0l1 2" stroke="#ddd"/></svg>
    <svg class="tr-v" viewBox="0 0 12 12"><path d="M1 4h2l3-3v10L3 8H1z" fill="none" stroke="#ddd"/><path d="M8 4c1 1 1 3 0 4M10 2c2 2 2 6 0 8" fill="none" stroke="#ddd"/></svg>
    <span class="eng">ENG</span>
    <span class="clock">06:50<br>13-10-2020</span>
    <svg class="tr-n" viewBox="0 0 12 12"><path d="M1 1h10v8H6L4 11V9H1z" fill="none" stroke="#ddd"/></svg>
  </div>
</div>
</body>
</html>
```

FILE: styles.css
```css
* { box-sizing: border-box; }
html, body { margin: 0; padding: 0; }
body {
  width: 908px; height: 510px; overflow: hidden;
  display: flex; flex-direction: column;
  background: #222933; color: #c6ccd5;
  font-family: Roboto, "Noto Sans", sans-serif; font-size: 8.5px; line-height: 10px;
  filter: blur(.3px);
}
.defs { position: absolute; width: 0; height: 0; }
.i { width: 14px; height: 14px; flex: none; display: block; }
i { display: block; flex: none; font-style: normal; }
.caret { width: 0; height: 0; border: 2.5px solid transparent; border-top: 3px solid #c6ccd5; border-bottom: 0; display: inline-block; }
.caret.mini { border-width: 2px; border-top-width: 2px; border-bottom: 0; border-top-color: #d8dce2; }

/* header */
.top { height: 30px; display: grid; grid-template-columns: 30px 1fr; grid-template-rows: 17px 13px; flex: none; }
.app {
  grid-row: 1 / 3; width: 27px; height: 28px; margin: 0 0 0 1px; padding: 0 0 0 3px; border: 0;
  background: linear-gradient(#8a8b8d, #6a6b6e 70%, #4a4b4d);
  display: flex; align-items: flex-start; justify-content: flex-start; position: relative;
}
.app .caret { position: absolute; right: 1px; top: 13px; }
.app-a { font: bold 26px/28px "Liberation Sans", sans-serif; color: #bf2329; text-shadow: 0 0 1px #e8e8e8; margin-top: 1px; }
.titlebar { display: flex; align-items: center; min-width: 0; }
.qat { width: 170px; display: flex; align-items: center; padding-left: 1px; flex: none; gap: 2px; }
.q-c { margin-left: 3px; border-top-color: #ddd; border-width: 3px; border-bottom: 0; }
.qat .caret.mini { margin: 0 4px; }
.doc-title { margin-left: 53px; width: 272px; white-space: nowrap; flex: none; font-size: 7.9px; color: #cdd2d9; }
.doc-name { margin-left: 8px; }
.play { margin-left: 2px; width: 0; height: 0; border: 3px solid transparent; border-left: 3px solid #ccc; border-right: 0; }
.search { margin-left: 4px; width: 119px; height: 13px; background: #3b4452; color: #98a0ac; font-style: italic; font-size: 7.4px; line-height: 13px; padding-left: 2px; flex: none; }
.account { display: flex; align-items: center; margin-left: 1px; width: 166px; flex: none; }
.account .i { margin-left: 1px; width: 13px; height: 13px; }
.account .i + .i { margin-left: 2px; }
.signin { margin-left: 1px; width: 59px; font-size: 8.2px; }
.account .caret.mini { margin: 0 3px 0 0; }
.vsep { width: 1px; height: 12px; background: #454d5b; margin: 0 6px 0 4px; }
.help { width: 11px; height: 11px; border-radius: 50%; background: #e9eef4; color: #1d4f86; font: bold 9px/11px "Liberation Sans", sans-serif; text-align: center; margin-right: 3px; }
.winbtns { display: flex; align-items: center; gap: 9px; margin-left: 45px; color: #dfe3e8; flex: none; }
.w-min { width: 6px; height: 1px; background: #ddd; margin-top: 6px; }
.w-res { width: 8px; height: 8px; border: 1px solid #ddd; }
.w-x { font-size: 9px; line-height: 10px; }
.tabs { display: flex; align-items: flex-end; gap: 11px; font-size: 8.4px; color: #b9c0ca; }
.tab { height: 13px; line-height: 13px; white-space: nowrap; }
.tab.on { width: 36px; margin-right: -3px; text-align: center; background: #3a4351; color: #e6e9ee; border-radius: 3px 3px 0 0; }
.tab-min { width: 9px; height: 6px; background: #ddd; margin: 0 -7px 3px 8px; }
.tabs .caret.mini { margin-bottom: 5px; }

/* ribbon */
.ribbon { height: 65px; flex: none; display: flex; padding-left: 1px; background: #394250; }
.panel { background: #394250; display: flex; flex-direction: column; border-right: 1px solid #2b323e; height: 64px; position: relative; flex: none; }
.pbody { flex: 1; display: flex; min-height: 0; }
.pbody.col { flex-direction: column; padding: 3px 2px 0; gap: 2px; }
.plabel { height: 12px; flex: none; text-align: center; line-height: 13px; font-size: 8.6px; color: #c6ccd5; position: relative; }
.plabel .caret { margin-left: 2px; vertical-align: 1px; }
.launch { position: absolute; right: 3px; top: 4px; width: 4px; height: 4px; border: 1px solid #aeb5bf; }
.p-modeling { width: 88px; }
.p-mesh { width: 52px; }
.p-solid { width: 63px; }
.p-draw { width: 62px; }
.p-modify { width: 97px; }
.p-section { width: 52px; }
.p-coord { width: 96px; }
.p-view { width: 85px; }
.p-sel { width: 114px; }
.big { display: flex; flex-direction: column; align-items: center; padding-top: 3px; text-align: center; color: #c6ccd5; }
.bi { width: 26px; height: 26px; display: block; margin-bottom: -1px; flex: none; }
.bi-w { width: 30px; }
.bi-s { width: 28px; height: 26px; }
.big .caret.mini { margin-top: 2px; }
.b-box { width: 30px; }
.b-ext { width: 38px; margin-left: 2px; }
.b-smooth { width: 34px; }
.b-section { width: 51px; }
.b-cull { width: 30px; margin-left: 1px; height: 49px; background: #3f5a77; border: 1px solid #5f93b9; padding-top: 1px; }
.b-nof { width: 42px; margin-left: 1px; }
.b-gizmo { width: 40px; }
.stack { display: flex; flex-direction: column; gap: 2px; padding-top: 3px; margin-left: 4px; }
.s3 { margin-left: 0; }
.tools { display: grid; grid-auto-rows: 16px; align-items: center; justify-items: center; padding-top: 2px; }
.t4 { grid-template-columns: 17px 17px 17px 8px; padding-left: 3px; }
.p-draw .t4 { padding-left: 4px; }
.t-mod { grid-template-columns: 18px 18px 17px 20px 17px 6px; }
.t-coord { grid-template-columns: 16px 10px 17px 17px 17px 16px; padding-left: 2px; }
.t-coord .caret { justify-self: start; margin-left: 1px; }
.combo { display: flex; align-items: center; height: 14px; background: #4a5465; color: #d4d8de; flex: none; position: relative; font-size: 8.4px; }
.combo .caret { position: absolute; right: 3px; top: 6px; }
.t-coord .combo .caret { margin-left: 0; }
.c-front { grid-column: 3 / 7; width: 65px; justify-self: start; gap: 2px; padding-left: 1px; }
.c-view { width: 80px; gap: 2px; padding-left: 1px; }
.swatch { width: 11px; height: 11px; background: #1b1e24; flex: none; }
.vrow { display: flex; align-items: center; gap: 3px; padding-left: 1px; margin-top: 1px; }
.fold { width: 38px; height: 64px; flex: none; background: #465061; display: flex; flex-direction: column; align-items: center; padding-top: 3px; margin-left: 2px; position: relative; color: #c6ccd5; }
.p-sel + .fold { margin-left: 1px; }
.fold .fi { width: 24px; height: 24px; display: block; margin-bottom: 0; }
.fold .caret { position: absolute; bottom: 3px; left: 16px; border-top-color: #ddd; }
.f-last { margin-left: 3px; }

/* docs */
.docs { height: 18px; flex: none; display: flex; align-items: stretch; padding-left: 15px; background: #222933; }
.doc { width: 80px; line-height: 15px; padding-left: 6px; font-size: 8.6px; margin: 2px 0 1px; }
.d-start { background: #2a3240; color: #8c94a0; border-radius: 5px 5px 0 0; }
.d-cur { margin-left: 2px; width: 81px; background: #343c4b; color: #c6ccd5; display: flex; justify-content: space-between; padding-right: 7px; border-radius: 5px 5px 0 0; }
.d-x { font-size: 8px; }
.d-plus { margin: 3px 0 2px 5px; width: 13px; text-align: center; line-height: 12px; background: #2b3340; font-size: 10px; font-weight: bold; color: #bbb; }

/* viewport */
.viewport {
  height: 352px; flex: none; position: relative; border-top: 2px solid #3e4756;
  background-color: #212731;
  background-image:
    linear-gradient(#2d343f 1px, transparent 1px),
    linear-gradient(90deg, #2d343f 1px, transparent 1px),
    linear-gradient(#252c36 1px, transparent 1px),
    linear-gradient(90deg, #252c36 1px, transparent 1px);
  background-size: 48px 48px, 48px 48px, 9.6px 9.6px, 9.6px 9.6px;
  background-position: 0 30px, 39px 0, 0 1px, 0.600px 0;
}
.canvas { position: absolute; left: 0; top: -2px; width: 908px; height: 352px; display: block; }
.axis { font: 300 14px "Open Sans", sans-serif; fill: #b9bcc1; }
.top-t { font: bold 6px "Liberation Sans", sans-serif; fill: #55585c; text-anchor: middle; }
.vlabel { position: absolute; left: 2px; top: 4px; font-size: 8.4px; color: #c9ccd2; white-space: nowrap; }
.vp-ctl { position: absolute; left: 862px; top: 5px; display: flex; align-items: center; gap: 5px; color: #dfe3e8; }
.v-min { width: 7px; height: 2px; background: #e6e6e6; margin-top: 4px; }
.v-res { width: 7px; height: 7px; border: 1.500px solid #e6e6e6; }
.v-x { font-size: 8px; font-weight: bold; line-height: 8px; }
.unnamed { position: absolute; left: 838px; top: 100px; width: 45px; height: 11px; background: #686c72; border: 1px solid #7a7f85; border-radius: 3px; color: #9b9ea2; font-size: 7.4px; line-height: 9px; padding-left: 2px; }
.edge { position: absolute; left: 902px; top: -2px; width: 3px; height: 352px; background: #9cc9ec; }
.dyn { position: absolute; left: 415px; top: 126px; width: 35px; height: 13px; background: #fff; padding: 1px; font-size: 8.4px; line-height: 11px; white-space: nowrap; }
.dyn span { display: inline-block; background: #3a7fd5; color: #fff; padding-right: 1px; }
.history { position: absolute; left: 222px; top: 294px; width: 252px; display: flex; flex-direction: column; gap: 3px; }
.history p { margin: 0; height: 10px; background: #484d54; color: #a9abae; font: 7.72px/10px "DejaVu Sans Mono", monospace; white-space: nowrap; overflow: hidden; padding-left: 2px; }
.cmd { position: absolute; left: 183px; top: 332px; width: 542px; height: 17px; display: flex; align-items: center; }
.grip { width: 6px; height: 15px; margin-left: 1px; background: repeating-linear-gradient(#c8c8c8 0 1px, transparent 1px 2px); }
.cmd-x { font-size: 10px; width: 11px; margin-left: -1px; color: #e0e0e0; text-align: center; }
.wr { width: 12px; height: 12px; margin-left: 4px; }
.cmd-in { margin-left: 3px; flex: 1; height: 17px; background: #fff; display: flex; align-items: center; color: #222; font: 7.72px/17px "DejaVu Sans Mono", monospace; position: relative; white-space: nowrap; overflow: hidden; }
.cmd-ic { width: 10px; height: 7px; margin-left: 3px; border: 1px dashed #8cc0ee; border-left: 0; }
.caret.dk { border-top-color: #444; margin: 0 4px 0 2px; }
.caret.dk.up { position: absolute; right: 0; top: 7px; border-top: 0; border-bottom: 3px solid #444; }
.cmd-in b { font-weight: bold; color: #111; margin-right: 3px; }
.chip { background: #d9d9d9; margin-left: 3px; padding: 0 1px; line-height: 12px; height: 12px; }
.cmd-t + .chip { margin-left: 0; }
.chip u { text-decoration: none; color: #2530c8; }
.menu { list-style: none; margin: 0; padding: 1px 2px; position: absolute; left: 474px; top: 137px; width: 118px; height: 226px; background: #f0f0f0; border: 1px solid #cfcfcf; color: #1a1a1a; font-size: 8.1px; z-index: 2; box-shadow: 1px 1px 2px rgba(0,0,0,.35); }
.menu li { height: 14.600px; line-height: 14.600px; padding-left: 20px; position: relative; white-space: nowrap; }
.menu li.hi { height: 15px; margin-bottom: -.8px; background: #90c8f6; }
.menu li.sep { height: 4.800px; padding: 0; }
.menu li.sep::after { content: ""; position: absolute; left: 20px; right: 0; top: 2px; height: 1px; background: #d9d9d9; }
.menu li.sub::after { content: ""; position: absolute; right: 6px; top: 5px; width: 3px; height: 3px; border-top: 1px solid #555; border-right: 1px solid #555; transform: rotate(45deg); }
.mi { position: absolute; left: 2px; top: 0; }

/* status */
.status { height: 18px; flex: none; display: flex; position: relative; background: #222933; }
.ltabs { display: flex; align-items: flex-start; padding: 0 0 0 8px; gap: 1px; font-size: 8.6px; }
.lt { height: 12px; line-height: 12px; width: 42px; text-align: center; background: #2c3441; color: #aab1bc; border-radius: 3px 3px 0 0; }
.lt.on { width: 38px; font-weight: bold; background: #3d4654; color: #d7dbe1; }
.lt-plus { width: 12px; text-align: center; font-weight: bold; font-size: 10px; line-height: 12px; color: #b8bec7; margin-left: 4px; }
.sgroups { position: absolute; left: 580px; top: 0; display: flex; gap: 2px; }
.sg { display: flex; align-items: center; height: 18px; background: #3a4352; flex: none; }
.sg .i { width: 13px; height: 13px; }
.sg .caret { margin: 0 3px; border-top-color: #dfe3e8; }
.sb { width: 15px; height: 15px; display: flex; align-items: center; justify-content: center; flex: none; }
.act { background: #4b86bd; }
.sg1 { width: 45px; }
.sg1 .sb { width: 14px; margin-right: 7.500px; }
.sg1 .caret { margin-left: 4px; }
.sg2 { width: 68px; padding-left: 2px; }
.sg2 .sb { margin-left: 3px; }
.sg2 .i + .caret { margin-left: 5px; }
.sg3 { width: 42px; gap: 2px; }
.sg3 .caret { margin: 0 0 0 -1px; }
.sg4 { width: 69px; gap: 2px; }
.ratio { font-size: 8px; margin-left: 4px; }
.sg4 .caret { margin: 0; }
.sg5 { width: 61px; padding-left: 2px; }
.sg5 .caret { margin: 0 5px 0 4px; }
.sg5 .i + .i { margin-left: 3px; }
.sg6 { width: 31px; padding-left: 1px; gap: 4px; }

/* taskbar */
.taskbar { height: 27px; flex: none; display: flex; align-items: center; background: #0a0a0b; color: #ddd; position: relative; }
.start { width: 32px; display: flex; justify-content: center; }
.winlogo { width: 12px; height: 12px; }
.tsearch { width: 228px; height: 27px; background: #f1f1f1; display: flex; align-items: center; color: #444; font-size: 10px; flex: none; }
.cortana { width: 13px; height: 13px; border: 2px solid #111; border-radius: 50%; margin: 0 6px 0 7px; }
.mic { width: 8px; height: 12px; margin-left: auto; margin-right: 10px; }
.taskview { width: 12px; height: 12px; margin-left: 10px; flex: none; }
.apps { display: flex; margin-left: 12px; height: 27px; flex: none; }
.ta { width: 32.500px; height: 27px; display: flex; align-items: center; justify-content: center; position: relative; }
.ta svg { width: 15px; height: 15px; }
.ta.run::after { content: ""; position: absolute; left: 3px; right: 3px; bottom: 0; height: 2px; background: #77b9e8; }
.ta.act { background: #333436; }
.acad { width: 16px; height: 16px; background: #f2f2f2; color: #b4232a; font: bold 15px/16px "Liberation Sans", sans-serif; text-align: center; }
.ppt { width: 15px; height: 15px; background: #f0e6df; color: #d24726; border: 1px solid #d24726; font: bold 12px/13px "Liberation Sans", sans-serif; text-align: center; }
.tray { position: absolute; left: 758px; top: 0; right: 0; height: 27px; display: flex; align-items: center; font-size: 8.6px; }
.tr-up { width: 9px; height: 6px; }
.tr-b { width: 11px; height: 9px; margin-left: 7px; }
.tr-v { width: 10px; height: 10px; margin-left: 6px; }
.eng { margin-left: 5px; }
.clock { width: 50px; margin-left: 1px; text-align: center; line-height: 11px; }
.tr-n { width: 12px; height: 12px; margin-left: 14px; }
```
